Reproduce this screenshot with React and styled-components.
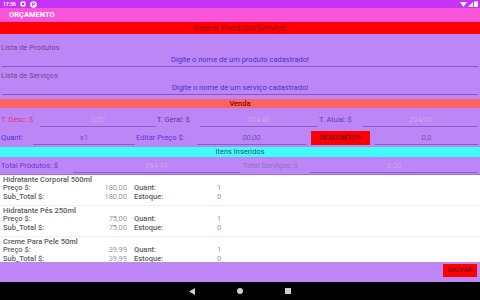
import React from "react";
import styled, { createGlobalStyle } from "styled-components";

const GlobalStyle = createGlobalStyle`
  html, body {
    margin: 0;
    padding: 0;
    overflow: hidden;
    background: #ffffff;
  }
  * {
    box-sizing: border-box;
  }
`;

const items = [
  { name: "Hidratante Corporal 500ml", price: "180,00", subtotal: "180,00", quant: "1", stock: "0" },
  { name: "Hidratante Pés 250ml", price: "75,00", subtotal: "75,00", quant: "1", stock: "0" },
  { name: "Creme Para Pele 50ml", price: "39,99", subtotal: "39,99", quant: "1", stock: "0" },
];

function StatusBar() {
  return (
    <Status>
      <StatusLeft>
        <span>17:56</span>
        <svg width="6" height="6" viewBox="0 0 6 6">
          <rect x="0.5" y="0.5" width="5" height="5" rx="1" fill="#fff" />
          <rect x="2" y="2" width="2" height="2" fill="#c432f4" />
        </svg>
        <svg width="7" height="7" viewBox="0 0 7 7">
          <circle cx="3.5" cy="3.5" r="3.3" fill="#fff" />
          <path d="M2.6 5.3V1.8h1.2a1 1 0 0 1 0 2H2.6" stroke="#c432f4" strokeWidth="0.9" fill="none" />
        </svg>
      </StatusLeft>
      <StatusRight>
        <svg width="7" height="5" viewBox="0 0 7 5">
          <path d="M0 0h7L3.5 5z" fill="#fff" />
        </svg>
        <svg width="5" height="5" viewBox="0 0 5 5">
          <path d="M5 0v5H0z" fill="#fff" />
        </svg>
        <svg width="4" height="6" viewBox="0 0 4 6">
          <rect x="0" y="0.5" width="4" height="5.5" fill="#fff" />
        </svg>
      </StatusRight>
    </Status>
  );
}

function App() {
  return (
    <Page>
      <GlobalStyle />
      <StatusBar />
      <AppBar>ORÇAMENTO</AppBar>
      <Banner>Inserir Produto/Serviço</Banner>
      <Form>
        <SearchBlock>
          <SearchLabel>Lista de Produtos</SearchLabel>
          <SearchInput>Digite o nome de um produto cadastrado!</SearchInput>
        </SearchBlock>
        <SearchBlock>
          <SearchLabel>Lista de Serviços</SearchLabel>
          <SearchInput>Digite o nome de um serviço cadastrado!</SearchInput>
        </SearchBlock>
        <SectionBar $bg="#ff6262" $color="#7a0a0a">Venda</SectionBar>
        <FieldRow $cols="40px 116px 44px 118px 45px 1fr" $pad="5px 2px 1px 0">
          <Label $color="#e43672">T. Desc: $</Label>
          <Value $color="#cdb8e8">0,00</Value>
          <Label $color="#5d3d98">T. Geral: $</Label>
          <Value $color="#cdb8e8">294,90</Value>
          <Label $color="#6440b0">T. Atual: $</Label>
          <Value $color="#cdb8e8">294,90</Value>
        </FieldRow>
        <FieldRow $cols="33px 102px 62px 109px 69px 1fr" $pad="3px 2px 2px 0">
          <Label $color="#4a36cf">Quant:</Label>
          <Value $color="#4a3a8e">x1</Value>
          <Label $color="#5a40d6">Editar Preço $:</Label>
          <Value $color="#4a3a8e">00,00</Value>
          <ButtonCell>
            <RedButton>DESCONTO%</RedButton>
          </ButtonCell>
          <Value $color="#4a3a8e">0,0</Value>
        </FieldRow>
        <SectionBar $bg="#42fbfb" $color="#2d5a6a" $height="10px" $weight="400">
          Itens Inseridos
        </SectionBar>
        <FieldRow $cols="73px 167px 70px 1fr" $pad="2px 2px 1px 0">
          <Label $color="#6a38d6">Total Produtos: $</Label>
          <Value $color="#cdb8e8">294,99</Value>
          <Label $color="#9272c0" $indent="3px">Total Serviços: $</Label>
          <Value $color="#cdb8e8">0,00</Value>
        </FieldRow>
      </Form>
      <ItemList>
        {items.map((item) => (
          <Item key={item.name}>
            <ItemTitle>{item.name}</ItemTitle>
            <ItemRow>
              <ItemLabel>Preço $:</ItemLabel>
              <ItemValue>{item.price}</ItemValue>
              <ItemLabel>Quant:</ItemLabel>
              <ItemCount>{item.quant}</ItemCount>
            </ItemRow>
            <ItemRow>
              <ItemLabel>Sub_Total $:</ItemLabel>
              <ItemValue>{item.subtotal}</ItemValue>
              <ItemLabel>Estoque:</ItemLabel>
              <ItemCount>{item.stock}</ItemCount>
            </ItemRow>
          </Item>
        ))}
      </ItemList>
      <Footer>
        <SaveButton>SALVAR</SaveButton>
      </Footer>
      <NavBar>
        <svg width="6" height="7" viewBox="0 0 6 7">
          <path d="M6 0v7L0 3.5z" fill="#cfcfcf" />
        </svg>
        <svg width="6" height="6" viewBox="0 0 6 6">
          <circle cx="3" cy="3" r="3" fill="#cfcfcf" />
        </svg>
        <svg width="6" height="6" viewBox="0 0 6 6">
          <rect width="6" height="6" fill="#cfcfcf" />
        </svg>
      </NavBar>
    </Page>
  );
}

const Page = styled.div`
  width: 480px;
  height: 300px;
  display: flex;
  flex-direction: column;
  font-family: Roboto, "Liberation Sans", sans-serif;
  overflow: hidden;
`;

const Status = styled.div`
  height: 8px;
  flex: none;
  background: #c432f4;
  display: flex;
  align-items: center;
  justify-content: space-between;
  padding: 0 2px 0 3px;
  color: #fff;
  font-size: 5px;
  font-weight: 700;
`;

const StatusLeft = styled.div`
  display: flex;
  align-items: center;
  gap: 4px;
`;

const StatusRight = styled.div`
  display: flex;
  align-items: center;
  gap: 1px;
`;

const AppBar = styled.div`
  height: 14px;
  flex: none;
  background: #fa55d9;
  color: #fff;
  font-size: 7.5px;
  font-weight: 700;
  line-height: 14px;
  padding-left: 9px;
`;

const Banner = styled.div`
  height: 12px;
  flex: none;
  background: #ff0000;
  color: #a00010;
  font-size: 9px;
  line-height: 12px;
  text-align: center;
`;

const Form = styled.div`
  flex: none;
  background: #bc86f7;
  display: flex;
  flex-direction: column;
  padding-top: 9px;
`;

const SearchBlock = styled.div`
  display: flex;
  flex-direction: column;
  margin-bottom: 4px;
  &:last-of-type {
    margin-bottom: 2px;
  }
`;

const SearchLabel = styled.div`
  font-size: 7.5px;
  line-height: 9px;
  color: #6b4a90;
  padding-left: 1px;
`;

const SearchInput = styled.div`
  height: 15px;
  line-height: 15px;
  margin: 0 2px 0 2px;
  border-bottom: 1px solid #8558c4;
  text-align: center;
  font-size: 7.5px;
  color: #4b32c4;
`;

const SectionBar = styled.div`
  height: ${(p) => p.$height || "9px"};
  background: ${(p) => p.$bg};
  color: ${(p) => p.$color};
  font-size: 7.5px;
  font-weight: ${(p) => p.$weight || "500"};
  line-height: ${(p) => p.$height || "9px"};
  text-align: center;
`;

const FieldRow = styled.div`
  display: grid;
  grid-template-columns: ${(p) => p.$cols};
  align-items: center;
  padding: ${(p) => p.$pad};
`;

const Label = styled.div`
  font-size: 7.5px;
  line-height: 14px;
  color: ${(p) => p.$color};
  padding-left: ${(p) => p.$indent || "1px"};
  white-space: nowrap;
`;

const Value = styled.div`
  height: 14px;
  line-height: 13px;
  font-size: 7.5px;
  font-weight: 300;
  color: ${(p) => p.$color};
  text-align: center;
  border-bottom: 1px solid #8c5ccb;
`;

const ButtonCell = styled.div`
  display: flex;
  justify-content: center;
  padding: 0 5px;
`;

const RedButton = styled.div`
  width: 59px;
  height: 14px;
  background: #ff0000;
  color: #6e0010;
  font-size: 7px;
  font-weight: 500;
  line-height: 14px;
  text-align: center;
`;

const ItemList = styled.div`
  flex: 1;
  background: #ffffff;
  border-top: 1px solid #a46ce6;
  overflow: hidden;
`;

const Item = styled.div`
  padding: 0 0 4px 3px;
  border-bottom: 1px solid #f0f0f0;
`;

const ItemTitle = styled.div`
  font-size: 7.5px;
  font-weight: 500;
  line-height: 9px;
  color: #5a5a5a;
`;

const ItemRow = styled.div`
  display: grid;
  grid-template-columns: 64px 60px 90px 1fr;
  align-items: center;
  height: 8.5px;
  font-size: 7.5px;
  line-height: 8.5px;
`;

const ItemLabel = styled.div`
  color: #5e5e5e;
  font-weight: 500;
  &:nth-child(3) {
    padding-left: 7px;
  }
`;

const ItemValue = styled.div`
  color: #9a9a9a;
  text-align: right;
`;

const ItemCount = styled.div`
  color: #9a9a9a;
`;

const Footer = styled.div`
  height: 20px;
  flex: none;
  background: #bc86f7;
  display: flex;
  justify-content: flex-end;
  align-items: flex-start;
  padding: 2px 3px 0 0;
`;

const SaveButton = styled.div`
  width: 34px;
  height: 13px;
  background: #ff0000;
  color: #8a0010;
  font-size: 7px;
  font-weight: 700;
  line-height: 13px;
  text-align: center;
`;

const NavBar = styled.div`
  height: 18px;
  flex: none;
  background: #000;
  display: flex;
  align-items: center;
  justify-content: center;
  gap: 42px;
`;

export default App;
